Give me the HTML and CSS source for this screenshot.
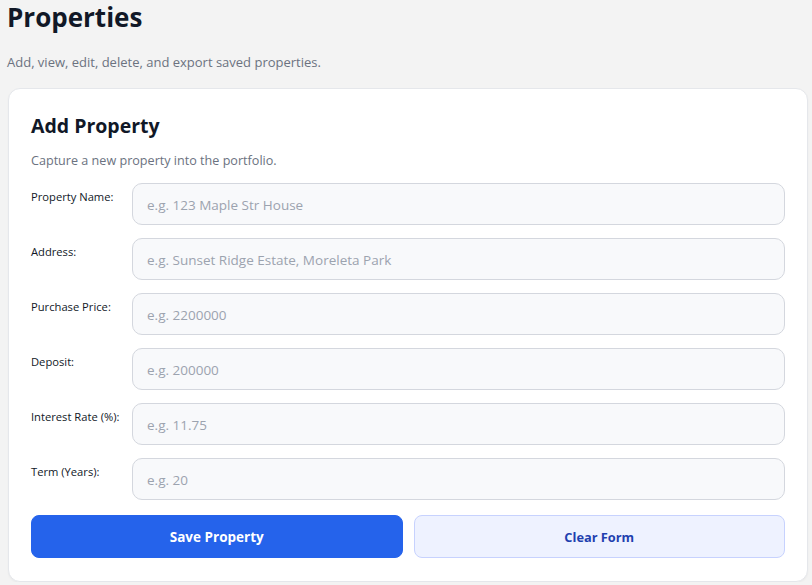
FILE: index.html
```html
<!DOCTYPE html>
<html lang="en">
<head>
<meta charset="utf-8">
<title>Properties</title>
<link rel="stylesheet" href="styles.css">
</head>
<body>
<header class="page-head">
  <h1 class="page-title">Properties</h1>
  <p class="page-sub">Add, view, edit, delete, and export saved properties.</p>
</header>
<section class="card">
  <h2 class="card-title">Add Property</h2>
  <p class="card-sub">Capture a new property into the portfolio.</p>
  <form class="form">
    <div class="row"><label class="label">Property Name:</label><input class="input" placeholder="e.g. 123 Maple Str House"></div>
    <div class="row"><label class="label">Address:</label><input class="input" placeholder="e.g. Sunset Ridge Estate, Moreleta Park"></div>
    <div class="row"><label class="label">Purchase Price:</label><input class="input" placeholder="e.g. 2200000"></div>
    <div class="row"><label class="label">Deposit:</label><input class="input" placeholder="e.g. 200000"></div>
    <div class="row"><label class="label">Interest Rate (%):</label><input class="input" placeholder="e.g. 11.75"></div>
    <div class="row"><label class="label">Term (Years):</label><input class="input" placeholder="e.g. 20"></div>
    <div class="actions">
      <button type="button" class="btn btn-primary">Save Property</button>
      <button type="button" class="btn btn-secondary">Clear Form</button>
    </div>
  </form>
</section>
</body>
</html>
```

FILE: styles.css
```css
* { box-sizing: border-box; }
html, body { margin: 0; }
body {
  background: #f3f3f3;
  padding: 0 4px 0 8px;
  font-family: "Open Sans", "Noto Sans", sans-serif;
  color: #111827;
}
.page-title {
  margin: 0 0 0 -1px;
  font-size: 26px;
  line-height: 34px;
  font-weight: 700;
  color: #111827;
}
.page-sub {
  margin: 19px 0 17px -1px;
  font-size: 13px;
  line-height: 18px;
  color: #6b7280;
}
.card {
  background: #fff;
  border: 1px solid #e5e7eb;
  border-radius: 12px;
  padding: 24px 22px 23px;
  box-shadow: 0 1px 2px rgba(0,0,0,0.04);
}
.card-title {
  margin: 0;
  font-size: 19.5px;
  line-height: 26px;
  font-weight: 700;
  color: #111827;
}
.card-sub {
  margin: 13px 0 13px;
  font-size: 12.6px;
  line-height: 18px;
  color: #6b7280;
}
.form { display: flex; flex-direction: column; gap: 13px; }
.row { display: flex; align-items: flex-start; }
.label {
  width: 101px;
  flex: none;
  padding-top: 7px;
  font-size: 11.2px;
  line-height: 14px;
  color: #111827;
}
.input {
  flex: 1;
  height: 42px;
  border: 1px solid #d4d7de;
  border-radius: 10px;
  background: #f8f9fb;
  padding: 1px 14px 0;
  font-family: inherit;
  font-size: 13.5px;
  color: #111827;
}
.input::placeholder { color: #9ca3af; }
.actions {
  display: flex;
  gap: 11px;
  margin-top: 2px;
}
.btn {
  flex: 1;
  height: 43px;
  border-radius: 8px;
  font-family: inherit;
  font-weight: 700;
  cursor: pointer;
}
.btn-primary {
  background: #2563eb;
  border: 1px solid #2563eb;
  color: #fff;
  font-size: 13.5px;
}
.btn-secondary {
  background: #eef2ff;
  border: 1px solid #c7d2fe;
  color: #1e40af;
  font-size: 12.8px;
}
```
